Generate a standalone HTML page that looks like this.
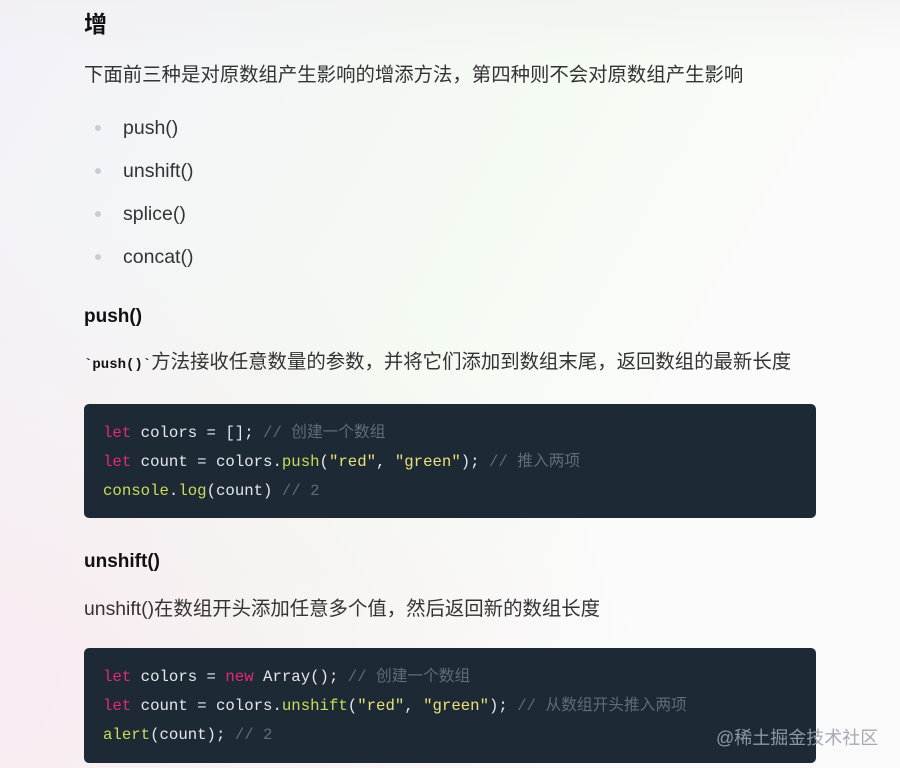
<!DOCTYPE html>
<html><head><meta charset="utf-8"><style>
*{margin:0;padding:0;box-sizing:border-box}
body{width:900px;height:768px;overflow:hidden;position:relative;font-family:"Liberation Sans","Noto Sans CJK SC",sans-serif;color:#252933;
background:linear-gradient(120deg,#f3f1fa 0%,#f4fbf2 45%,#fbfbfb 70%,#fafafa 100%);}
.bg2{position:absolute;inset:0;background:radial-gradient(ellipse at 0% 90%,rgba(250,230,240,.7),transparent 50%),linear-gradient(180deg,rgba(240,240,240,.6) 0,transparent 60px)}
.t{position:absolute;left:84px;white-space:nowrap}
h1{position:absolute;left:84px;top:5px;font-size:23px;font-weight:bold;color:#111}
.p{font-size:19.4px;color:#333}
.li{position:absolute;left:123px;font-size:19.5px;color:#333}
.dot{position:absolute;left:95px;width:6px;height:6px;border-radius:50%;background:#c9ccd2}
h3{position:absolute;left:84px;font-size:19px;font-weight:bold;color:#111}
.code{position:absolute;left:84px;width:732px;background:#1e2936;border-radius:5px;padding:15px 19px;font-family:"Liberation Mono","Noto Sans CJK SC",monospace;font-size:15.7px;line-height:29px;color:#e5e7eb;white-space:pre}
.k{color:#e0287d}.f{color:#c8dc5a}.s{color:#e8e27a}.c{color:#5e6c7a}
.wm{position:absolute;left:716px;top:724px;font-size:18px;color:#9ba3ad;opacity:.9}
</style></head><body><div class="bg2"></div>
<h1>增</h1>
<div class="t p" style="top:58px">下面前三种是对原数组产生影响的增添方法，第四种则不会对原数组产生影响</div>
<span class="dot" style="top:125px"></span><div class="li" style="top:117px">push()</div>
<span class="dot" style="top:168px"></span><div class="li" style="top:160px">unshift()</div>
<span class="dot" style="top:211px"></span><div class="li" style="top:203px">splice()</div>
<span class="dot" style="top:254px"></span><div class="li" style="top:246px">concat()</div>
<h3 style="top:306px">push()</h3>
<div class="t p" style="top:345px"><b style="font-family:'Liberation Mono',monospace;font-size:14px;color:#111">`push()`</b>方法接收任意数量的参数，并将它们添加到数组末尾，返回数组的最新长度</div>
<div class="code" style="top:404px;height:114px"><span class="k">let</span> colors = []; <span class="c">// 创建一个数组</span>
<span class="k">let</span> count = colors.<span class="f">push</span>(<span class="s">"red"</span>, <span class="s">"green"</span>); <span class="c">// 推入两项</span>
<span class="f">console</span>.<span class="f">log</span>(count) <span class="c">// 2</span></div>
<h3 style="top:551px">unshift()</h3>
<div class="t p" style="top:592px">unshift()在数组开头添加任意多个值，然后返回新的数组长度</div>
<div class="code" style="top:648px;height:115px"><span class="k">let</span> colors = <span class="k">new</span> Array(); <span class="c">// 创建一个数组</span>
<span class="k">let</span> count = colors.<span class="f">unshift</span>(<span class="s">"red"</span>, <span class="s">"green"</span>); <span class="c">// 从数组开头推入两项</span>
<span class="f">alert</span>(count); <span class="c">// 2</span></div>
<div class="wm">@稀土掘金技术社区</div>
</body></html>
